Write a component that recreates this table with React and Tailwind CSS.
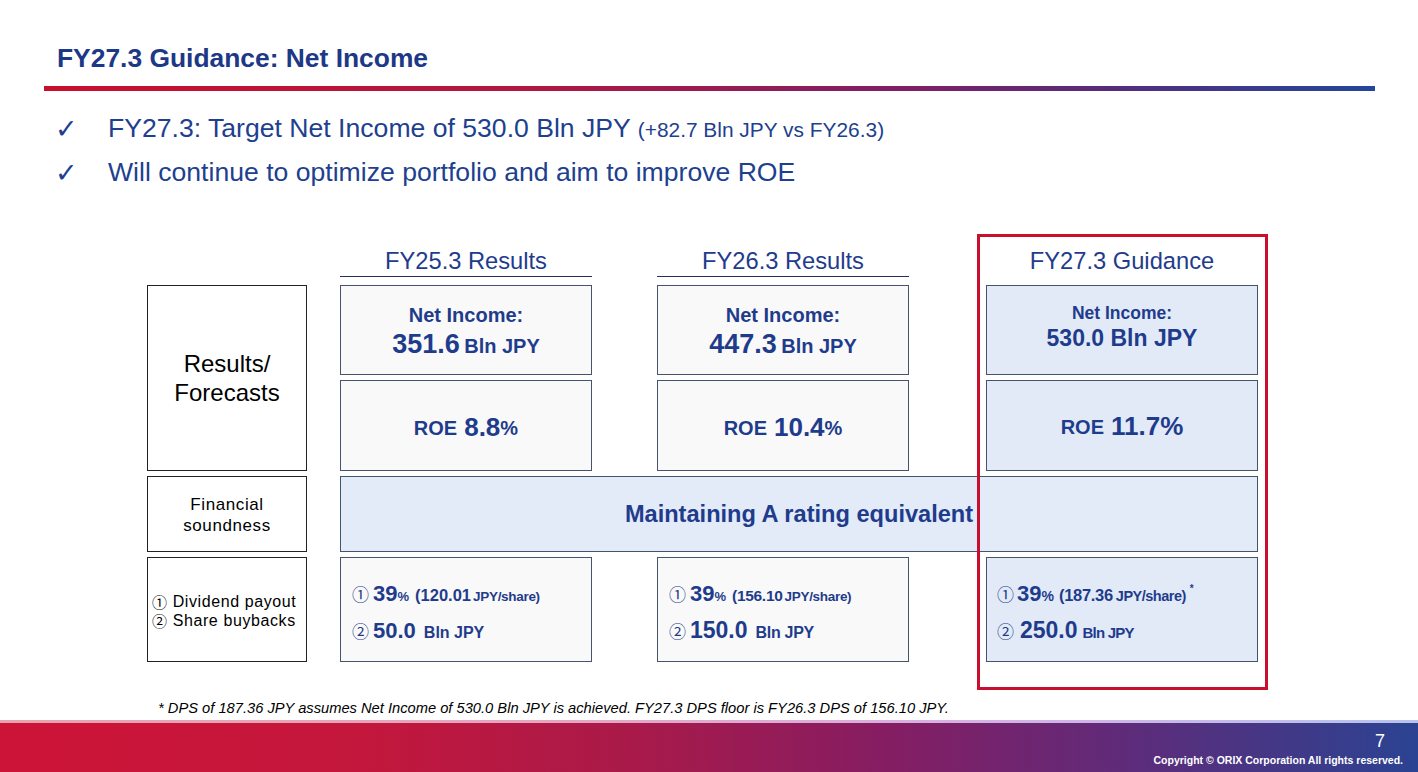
export default function App() {
  return (
    <div className="w-[1418px] h-[772px] bg-white flex flex-col overflow-hidden font-['Liberation_Sans','Noto_Sans_CJK_JP',sans-serif]">
      <h1 className="pt-[43px] pl-[57px] text-[26.4px] leading-[30px] font-bold text-[#1c3887]">
        FY27.3 Guidance: Net Income
      </h1>
      <div className="mt-[13px] ml-[44px] w-[1331px] h-[5px] bg-[linear-gradient(to_right,#c8102e_0%,#b3173f_35%,#7e1f66_65%,#552c7c_80%,#22479a_100%)]" />

      <ul className="mt-[16px] flex flex-col text-[#213f8f]">
        <li className="flex items-center h-[44px]">
          <span className="w-[108px] pl-[55px] text-[27px] leading-[30px] font-['DejaVu_Sans',sans-serif]">✓</span>
          <span className="text-[26.6px]">
            FY27.3: Target Net Income of 530.0 Bln JPY{" "}
            <span className="text-[20.9px]">(+82.7 Bln JPY vs FY26.3)</span>
          </span>
        </li>
        <li className="flex items-center h-[44px]">
          <span className="w-[108px] pl-[55px] text-[27px] leading-[30px] font-['DejaVu_Sans',sans-serif]">✓</span>
          <span className="text-[26.6px]">Will continue to optimize portfolio and aim to improve ROE</span>
        </li>
      </ul>

      <div className="relative mt-[48px] ml-[147px] w-[1111px] grid grid-cols-[160px_33px_252px_65px_252px_77px_272px] grid-rows-[37px_90px_91px_76px_105px] gap-y-[5px] text-[#1f3c8c]">
        {/* headers */}
        <div className="col-start-3 row-start-1 flex flex-col justify-end pb-[3px]">
          <div className="text-center text-[23.7px] leading-[28px] pb-[1px]">FY25.3 Results</div>
          <div className="h-[1.5px] bg-[#1f3060]" />
        </div>
        <div className="col-start-5 row-start-1 flex flex-col justify-end pb-[3px]">
          <div className="text-center text-[23.7px] leading-[28px] pb-[1px]">FY26.3 Results</div>
          <div className="h-[1.5px] bg-[#1f3060]" />
        </div>
        <div className="col-start-7 row-start-1 flex flex-col justify-end pb-[5px]">
          <div className="text-center text-[23.7px] leading-[28px]">FY27.3 Guidance</div>
        </div>

        {/* left labels */}
        <div className="col-start-1 row-start-2 row-span-2 border border-[#222] bg-white flex flex-col items-center justify-center text-black text-[24px] leading-[29px]">
          <span>Results/</span>
          <span>Forecasts</span>
        </div>
        <div className="col-start-1 row-start-4 border border-[#222] bg-white flex flex-col items-center justify-center text-black text-[17px] leading-[21px] tracking-[0.6px] pt-[2px]">
          <span>Financial</span>
          <span>soundness</span>
        </div>
        <div className="col-start-1 row-start-5 border border-[#222] bg-white flex flex-col justify-center pl-[4px] pt-[2px] text-black text-[16px] leading-[19px] tracking-[0.6px]">
          <span className="flex items-center h-[19px]"><span className="text-[15px] leading-none font-['Noto_Sans_CJK_JP',sans-serif]">①</span>&nbsp;Dividend payout</span>
          <span className="flex items-center h-[19px]"><span className="text-[15px] leading-none font-['Noto_Sans_CJK_JP',sans-serif]">②</span>&nbsp;Share buybacks</span>
        </div>

        {/* net income row */}
        <div className="col-start-3 row-start-2 border border-[#44546a] bg-[#f9f9f9] flex flex-col items-center justify-center font-bold pt-[5px]">
          <span className="text-[20px] leading-[26px]">Net Income:</span>
          <span className="leading-[32px]"><span className="text-[27px]">351.6</span> <span className="text-[20px]">Bln JPY</span></span>
        </div>
        <div className="col-start-5 row-start-2 border border-[#44546a] bg-[#f9f9f9] flex flex-col items-center justify-center font-bold pt-[5px]">
          <span className="text-[20px] leading-[26px]">Net Income:</span>
          <span className="leading-[32px]"><span className="text-[27px]">447.3</span> <span className="text-[20px]">Bln JPY</span></span>
        </div>
        <div className="col-start-7 row-start-2 border border-[#44546a] bg-[#e2eaf8] flex flex-col items-center justify-center font-bold pb-[6px]">
          <span className="text-[17.5px] leading-[22px]">Net Income:</span>
          <span className="text-[23px] leading-[28px]">530.0 Bln JPY</span>
        </div>

        {/* ROE row */}
        <div className="col-start-3 row-start-3 border border-[#44546a] bg-[#f9f9f9] flex items-center justify-center font-bold pt-[4px]">
          <span className="text-[20px]">ROE</span>
          <span className="ml-[7px] text-[26px]">8.8</span>
          <span className="text-[20px]">%</span>
        </div>
        <div className="col-start-5 row-start-3 border border-[#44546a] bg-[#f9f9f9] flex items-center justify-center font-bold pt-[4px]">
          <span className="text-[20px]">ROE</span>
          <span className="ml-[7px] text-[26px]">10.4</span>
          <span className="text-[20px]">%</span>
        </div>
        <div className="col-start-7 row-start-3 border border-[#44546a] bg-[#e2eaf8] flex items-center justify-center font-bold pt-[2px]">
          <span className="text-[20px]">ROE</span>
          <span className="ml-[7px] text-[26px]">11.7%</span>
        </div>

        {/* financial soundness */}
        <div className="col-start-3 col-span-5 row-start-4 border border-[#44546a] bg-[#e3eaf8] flex items-center justify-center pt-[2px]">
          <span className="text-[23.6px] font-bold">Maintaining A rating equivalent</span>
        </div>

        {/* payout row */}
        <div className="col-start-3 row-start-5 border border-[#44546a] bg-[#f9f9f9] flex flex-col justify-center pl-[11px] pt-[4px]">
          <div className="flex items-baseline h-[37px] leading-[37px]">
            <span className="text-[17px] font-['Noto_Sans_CJK_JP',sans-serif]">①</span>
            <span className="ml-[4px] text-[22px] font-bold">39</span>
            <span className="text-[13px] font-bold">%</span>
            <span className="ml-[6px] text-[16.5px] font-bold">(120.01</span>
            <span className="ml-[2px] text-[13.5px] font-bold tracking-[-0.3px]">JPY/share)</span>
          </div>
          <div className="flex items-baseline h-[37px] leading-[37px]">
            <span className="text-[17px] font-['Noto_Sans_CJK_JP',sans-serif]">②</span>
            <span className="ml-[4px] text-[22px] font-bold">50.0</span>
            <span className="ml-[8px] text-[16px] font-bold">Bln JPY</span>
          </div>
        </div>
        <div className="col-start-5 row-start-5 border border-[#44546a] bg-[#f9f9f9] flex flex-col justify-center pl-[11px] pt-[4px]">
          <div className="flex items-baseline h-[37px] leading-[37px]">
            <span className="text-[17px] font-['Noto_Sans_CJK_JP',sans-serif]">①</span>
            <span className="ml-[4px] text-[22px] font-bold">39</span>
            <span className="text-[13px] font-bold">%</span>
            <span className="ml-[6px] text-[15.5px] font-bold tracking-[-0.3px]">(156.10</span>
            <span className="ml-[2px] text-[13.5px] font-bold tracking-[-0.3px]">JPY/share)</span>
          </div>
          <div className="flex items-baseline h-[37px] leading-[37px]">
            <span className="text-[17px] font-['Noto_Sans_CJK_JP',sans-serif]">②</span>
            <span className="ml-[4px] text-[23px] font-bold">150.0</span>
            <span className="ml-[8px] text-[16px] font-bold tracking-[-0.3px]">Bln JPY</span>
          </div>
        </div>
        <div className="col-start-7 row-start-5 border border-[#44546a] bg-[#e2eaf8] flex flex-col justify-center pl-[10px] pt-[4px]">
          <div className="flex items-baseline h-[37px] leading-[37px]">
            <span className="text-[17px] font-['Noto_Sans_CJK_JP',sans-serif]">①</span>
            <span className="ml-[3px] text-[22px] font-bold">39</span>
            <span className="text-[14px] font-bold">%</span>
            <span className="ml-[5px] text-[16.5px] font-bold tracking-[-0.3px]">(187.36</span>
            <span className="ml-[3px] text-[14.5px] font-bold tracking-[-0.5px]">JPY/share)</span>
            <span className="ml-[4px] text-[10px] font-bold self-start leading-[28px]">*</span>
          </div>
          <div className="flex items-baseline h-[37px] leading-[37px]">
            <span className="text-[17px] font-['Noto_Sans_CJK_JP',sans-serif]">②</span>
            <span className="ml-[6px] text-[23px] font-bold">250.0</span>
            <span className="ml-[5px] text-[15px] font-bold tracking-[-0.8px]">Bln JPY</span>
          </div>
        </div>

        {/* red highlight overlay */}
        <div className="absolute left-[830px] top-[-9px] w-[291px] h-[456px] border-[3px] border-[#c8102e] pointer-events-none" />
      </div>

      <p className="mt-[37px] ml-[158px] text-[14.7px] leading-[18px] italic text-black">
        * DPS of 187.36 JPY assumes Net Income of 530.0 Bln JPY is achieved. FY27.3 DPS floor is FY26.3 DPS of 156.10 JPY.
      </p>

      <div className="mt-auto h-[52px] flex flex-col">
        <div className="h-[3px] bg-[linear-gradient(to_right,#e9a3ae_0%,#e4a6c2_40%,#d4b3e6_70%,#b7c4ee_100%)]" />
        <div className="flex-1 bg-[linear-gradient(to_right,#cc1437_0%,#c4173c_25%,#a81a4a_45%,#861d62_62%,#622a78_78%,#2a4392_100%)] flex flex-col items-end pr-[15px] text-white">
          <span className="mt-[8px] mr-[18px] text-[18px] leading-[20px]">7</span>
          <span className="mt-[3px] text-[10.5px] leading-[12px] font-bold">Copyright © ORIX Corporation All rights reserved.</span>
        </div>
      </div>
    </div>
  );
}
